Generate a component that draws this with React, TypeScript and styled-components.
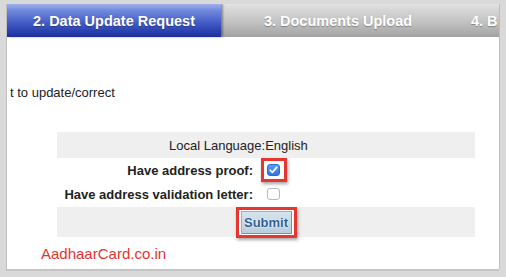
import React from "react";
import styled, { createGlobalStyle } from "styled-components";

const GlobalStyle = createGlobalStyle`
  html, body { margin: 0; padding: 0; }
  body {
    background: #d8d8d8;
    font-family: "Liberation Sans", Arial, Helvetica, sans-serif;
  }
`;

// outer grey frame of the screenshot
const Frame = styled.div`
  width: 506px;
  height: 277px;
  box-sizing: border-box;
  padding: 4px 7px 8px 6px;
  background: #d9d9d9;
  overflow: hidden;
`;

const Panel = styled.div`
  height: 100%;
  background: #fff;
  border-left: 1px solid #c0c0c0;
  box-shadow: 0 2px 0 #c4c4c4, 1px 0 0 #bdbdbd;
  display: flex;
  flex-direction: column;
  overflow: hidden;
`;

// tab strip
const TabBar = styled.div`
  display: flex;
  height: 33px;
  flex-shrink: 0;
  background: linear-gradient(#e2e2e2 0%, #d6d6d6 18%, #c2c2c2 55%, #a2a2a2 100%);
`;

const Tab = styled.div<{ $active?: boolean; $w?: number }>`
  flex: 0 0 ${(p) => (p.$w ? `${p.$w}px` : "auto")};
  display: flex;
  align-items: center;
  justify-content: ${(p) => (p.$w ? "center" : "flex-start")};
  padding-left: ${(p) => (p.$w ? 0 : 16)}px;
  white-space: nowrap;
  font-size: 14.5px;
  font-weight: bold;
  color: #fff;
  position: relative;
  background: ${(p) =>
    p.$active
      ? "linear-gradient(#9eb1ec 0%, #7189dc 20%, #3f59c4 60%, #1b2f9c 100%)"
      : "transparent"};
  box-shadow: ${(p) => (p.$active ? "2px 0 2px rgba(0,0,0,0.35)" : "none")};
  text-shadow: 0 1px 1px rgba(0, 0, 0, 0.3);
  z-index: ${(p) => (p.$active ? 1 : 0)};
`;

const Intro = styled.div`
  margin: 48px 0 0 3px;
  font-size: 13px;
  line-height: 15px;
  color: #222;
`;

const Table = styled.div`
  margin: 32px 0 0 50px;
  width: 418px;
  display: flex;
  flex-direction: column;
`;

const LangRow = styled.div`
  height: 26px;
  background: #efefef;
  display: flex;
  align-items: center;
  padding-left: 112px;
  font-size: 13px;
  color: #222;
`;

const FieldRow = styled.div`
  height: 24px;
  display: grid;
  grid-template-columns: 196px 1fr;
  column-gap: 8px;
  align-items: center;
`;

const Label = styled.div`
  text-align: right;
  font-size: 13px;
  font-weight: bold;
  color: #222;
`;

const Cell = styled.div<{ $pad: number }>`
  display: flex;
  align-items: center;
  padding-left: ${(p) => p.$pad}px;
`;

// red annotation frame around a control
const Highlight = styled.span<{ $pad: string }>`
  display: inline-flex;
  align-items: center;
  justify-content: center;
  border: 3px solid #e53632;
  padding: ${(p) => p.$pad};
  box-shadow: 1px 2px 3px rgba(0, 0, 0, 0.35);
  background: #fff;
`;

const Check = styled.span<{ $checked?: boolean }>`
  width: 13px;
  height: 12px;
  box-sizing: border-box;
  border-radius: 3px;
  display: inline-flex;
  align-items: center;
  justify-content: center;
  background: ${(p) => (p.$checked ? "linear-gradient(#5b9cf8, #2f74ea)" : "#fff")};
  border: 1px solid ${(p) => (p.$checked ? "#2a6bd8" : "#b9b9b9")};
`;

const SubmitRow = styled.div`
  height: 30px;
  margin-top: 1px;
  background: #efefef;
  display: flex;
  align-items: center;
  justify-content: center;
`;

const Button = styled.span`
  width: 51px;
  height: 23px;
  box-sizing: border-box;
  display: inline-flex;
  align-items: center;
  justify-content: center;
  background: linear-gradient(#d6e3ec, #b9cdda);
  border: 1px solid #9fb3c2;
  border-right-color: #7d8f9c;
  border-bottom-color: #7d8f9c;
  font-size: 13px;
  font-weight: bold;
  color: #2f5f93;
  text-shadow: 0 0 2px #fff, 0 0 1px #fff;
`;

const Brand = styled.div`
  margin: 8px 0 0 34px;
  font-size: 15px;
  line-height: 17px;
  color: #e8332f;
`;

const Tick = () => (
  <svg width="9" height="8" viewBox="0 0 9 8">
    <path d="M1.3 4.3 L3.4 6.3 L7.7 1.4" fill="none" stroke="#fff" strokeWidth="1.8" strokeLinecap="round" strokeLinejoin="round" />
  </svg>
);

export default function App() {
  return (
    <>
      <GlobalStyle />
      <Frame>
        <Panel>
          <TabBar>
            <Tab $active $w={214}>2. Data Update Request</Tab>
            <Tab $w={234}>3. Documents Upload</Tab>
            <Tab>4. B</Tab>
          </TabBar>

          <Intro>t to update/correct</Intro>

          <Table>
            <LangRow>Local Language:English</LangRow>
            <FieldRow>
              <Label>Have address proof:</Label>
              <Cell $pad={0}>
                <Highlight $pad="3px 4px 3px 3px">
                  <Check $checked>
                    <Tick />
                  </Check>
                </Highlight>
              </Cell>
            </FieldRow>
            <FieldRow>
              <Label>Have address validation letter:</Label>
              <Cell $pad={6}>
                <Check />
              </Cell>
            </FieldRow>
            <SubmitRow>
              <Highlight $pad="1px 2px">
                <Button>Submit</Button>
              </Highlight>
            </SubmitRow>
          </Table>

          <Brand>AadhaarCard.co.in</Brand>
        </Panel>
      </Frame>
    </>
  );
}
